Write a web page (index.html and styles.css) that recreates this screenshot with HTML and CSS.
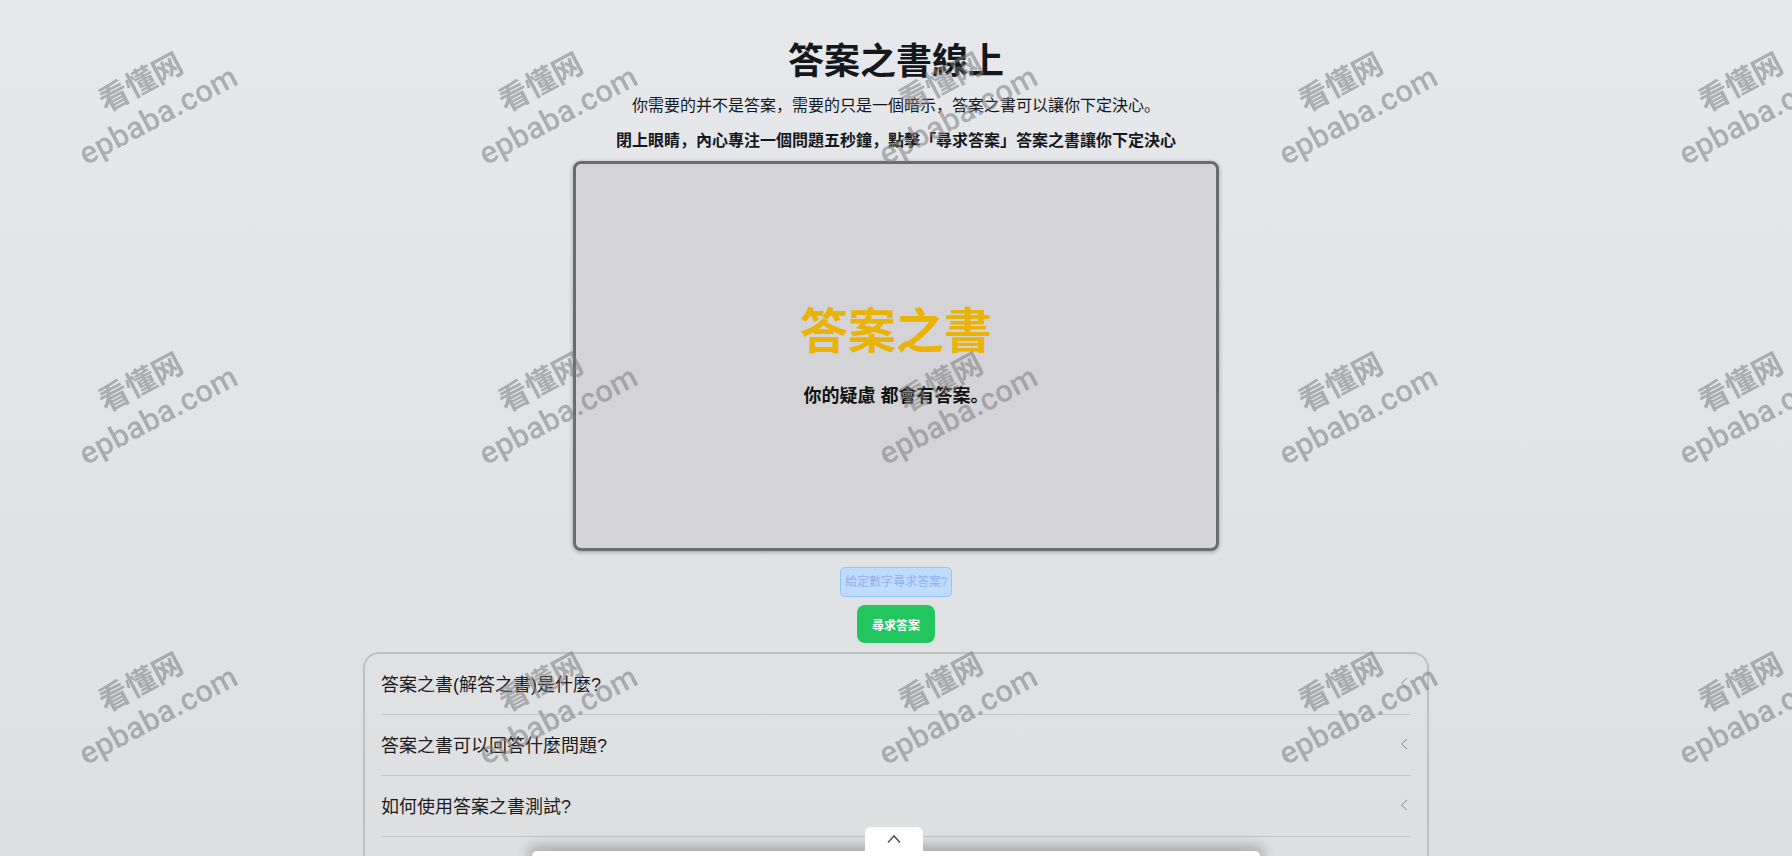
FILE: index.html
```html
<!DOCTYPE html>
<html lang="zh-CN">
<head>
    <meta charset="UTF-8">
    <meta name="viewport" content="width=device-width, initial-scale=1.0">
    <title>答案之書線上</title>
    <link rel="stylesheet" href="styles.css">
</head>
<body>
    <div class="container">
        <h1>答案之書線上</h1>
        <p class="intro">你需要的并不是答案&#xFF0C;需要的只是一個暗示&#xFF0C;答案之書可以讓你下定決心。</p>
        <p class="hint">閉上眼睛&#xFF0C;內心專注一個問題五秒鐘&#xFF0C;點擊「尋求答案」答案之書讓你下定決心</p>

        <div class="book">
            <div class="book-title">答案之書</div>
            <div class="book-text">你的疑慮 都會有答案。</div>
        </div>

        <input class="number-input" type="text" placeholder="給定數字尋求答案?">
        <button class="ask">尋求答案</button>

        <div class="faq">
            <div class="faq-row">
                <span>答案之書(解答之書)是什麼?</span>
                <svg class="chevron" viewBox="0 0 8 12"><path d="M7 1 1.5 6 7 11"/></svg>
            </div>
            <div class="faq-row">
                <span>答案之書可以回答什麼問題?</span>
                <svg class="chevron" viewBox="0 0 8 12"><path d="M7 1 1.5 6 7 11"/></svg>
            </div>
            <div class="faq-row">
                <span>如何使用答案之書測試?</span>
                <svg class="chevron" viewBox="0 0 8 12"><path d="M7 1 1.5 6 7 11"/></svg>
            </div>
        </div>
    </div>

    <div class="ad-panel">
        <div class="ad-tab">
            <svg viewBox="0 0 16 10"><path d="M2 8.5 8 2l6 6.500"/></svg>
        </div>
    </div>

    <div class="watermarks">
        <div class="mark"><b>看懂网</b><i>epbaba.com</i></div>
        <div class="mark"><b>看懂网</b><i>epbaba.com</i></div>
        <div class="mark"><b>看懂网</b><i>epbaba.com</i></div>
        <div class="mark"><b>看懂网</b><i>epbaba.com</i></div>
        <div class="mark"><b>看懂网</b><i>epbaba.com</i></div>
        <div class="mark"><b>看懂网</b><i>epbaba.com</i></div>
        <div class="mark"><b>看懂网</b><i>epbaba.com</i></div>
        <div class="mark"><b>看懂网</b><i>epbaba.com</i></div>
        <div class="mark"><b>看懂网</b><i>epbaba.com</i></div>
        <div class="mark"><b>看懂网</b><i>epbaba.com</i></div>
        <div class="mark"><b>看懂网</b><i>epbaba.com</i></div>
        <div class="mark"><b>看懂网</b><i>epbaba.com</i></div>
        <div class="mark"><b>看懂网</b><i>epbaba.com</i></div>
        <div class="mark"><b>看懂网</b><i>epbaba.com</i></div>
        <div class="mark"><b>看懂网</b><i>epbaba.com</i></div>
    </div>
</body>
</html>
```

FILE: styles.css
```css
html, body {
    height: 100%;
    overflow: hidden;
}
body {
    margin: 0;
    position: relative;
    font-family: "Liberation Sans", "Noto Sans CJK SC", sans-serif;
    color: #14181d;
    background: linear-gradient(#e6e8eb, #dedfe1);
}
.container {
    display: flex;
    flex-direction: column;
    align-items: center;
    padding-top: 40px;
}
h1 {
    margin: 0;
    font-size: 36px;
    line-height: 44px;
    font-weight: 700;
}
.intro {
    margin: 0;
    padding-top: 10px;
    font-size: 16px;
    line-height: 24px;
}
.hint {
    margin: 0;
    padding-top: 11px;
    font-size: 16px;
    line-height: 24px;
    font-weight: 700;
}
.book {
    box-sizing: border-box;
    width: 646px;
    height: 390px;
    margin-top: 8px;
    display: flex;
    flex-direction: column;
    align-items: center;
    justify-content: center;
    background-color: #d4d4d8;
    border: 3px solid #6b6b70;
    border-radius: 8px;
    box-shadow: 0 1px 4px rgba(0, 0, 0, 0.3);
}
.book-title {
    font-size: 48px;
    line-height: 60px;
    font-weight: 700;
    color: #eab308;
}
.book-text {
    margin-top: 20px;
    font-size: 18px;
    line-height: 28px;
    font-weight: 700;
    color: #111;
}
.number-input {
    box-sizing: border-box;
    width: 112px;
    height: 30px;
    margin-top: 16px;
    padding: 0 4px;
    font-family: inherit;
    font-size: 12px;
    background-color: #bfdbfe;
    border: 1px solid #93c5fd;
    border-radius: 5px;
}
.number-input::placeholder {
    color: #8fb2ee;
    opacity: 1;
}
.ask {
    width: 78px;
    height: 38px;
    margin-top: 8px;
    padding: 0;
    font-family: inherit;
    font-size: 12px;
    font-weight: 700;
    color: white;
    background-color: #22c55e;
    border: none;
    border-radius: 8px;
    cursor: pointer;
}
.faq {
    box-sizing: border-box;
    width: 1066px;
    margin-top: 9px;
    padding: 0 16px 60px;
    border: 2px solid #bfc0c2;
    border-radius: 16px;
}
.faq-row {
    display: flex;
    align-items: center;
    justify-content: space-between;
    height: 61px;
    box-sizing: border-box;
    padding-bottom: 3px;
    font-size: 18px;
    border-bottom: 1px solid #c4c5c6;
    color: #1c1c1e;
}
.chevron {
    width: 8px;
    height: 12px;
    margin-right: 3px;
    fill: none;
    stroke: #8a8a8c;
    stroke-width: 1;
}
.ad-panel {
    position: fixed;
    left: 532px;
    bottom: 0;
    width: 728px;
    height: 5px;
    background-color: white;
    border-radius: 6px 6px 0 0;
    box-shadow: 0 0 14px 4px rgba(0, 0, 0, 0.3);
}
.ad-tab {
    position: absolute;
    left: 333px;
    bottom: 5px;
    width: 58px;
    height: 24px;
    display: flex;
    align-items: center;
    justify-content: center;
    background-color: white;
    border-radius: 6px 6px 0 0;
}
.ad-tab svg {
    width: 16px;
    height: 10px;
    fill: none;
    stroke: #555;
    stroke-width: 1.6;
}
.watermarks {
    position: absolute;
    top: -52px;
    left: -51px;
    display: grid;
    grid-template-columns: repeat(5, 400px);
    grid-auto-rows: 300px;
    pointer-events: none;
}
.mark {
    display: flex;
    flex-direction: column;
    align-items: center;
    justify-content: center;
    transform: rotate(-28deg);
    color: rgba(125, 125, 127, 0.55);
}
.mark b {
    font-size: 30px;
    line-height: 40px;
    font-weight: 700;
}
.mark i {
    font-family: Roboto, sans-serif;
    font-style: normal;
    font-size: 31px;
    line-height: 34px;
    font-weight: 500;
    letter-spacing: 0.3px;
}
```
